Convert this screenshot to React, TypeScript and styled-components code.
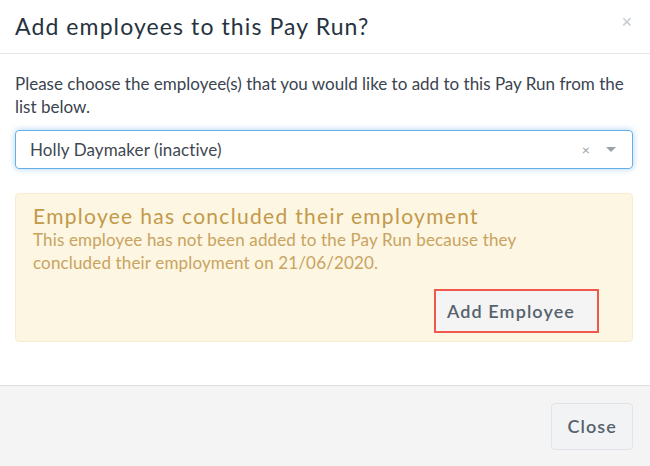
import React from 'react'
import styled, { createGlobalStyle } from 'styled-components'

const GlobalStyle = createGlobalStyle`
  html, body {
    margin: 0;
    padding: 0;
    background: #fff;
  }
  body {
    font-family: Lato, 'Open Sans', Arial, sans-serif;
    color: #3a4450;
  }
`

const Modal = styled.div`
  width: 650px;
  height: 466px;
  display: flex;
  flex-direction: column;
  background: #fff;
  overflow: hidden;
`

const Header = styled.div`
  height: 53px;
  display: flex;
  align-items: center;
  justify-content: space-between;
  padding: 0 18px 0 15px;
  border-bottom: 1px solid #e5e5e5;
  box-sizing: content-box;
`

const Title = styled.h4`
  margin: 0 0 2px;
  font-size: 23px;
  font-weight: 400;
  letter-spacing: 1.1px;
  color: #263340;
`

const CloseX = styled.button`
  border: none;
  background: none;
  padding: 0;
  font-size: 18px;
  line-height: 1;
  color: #c5c9cd;
  cursor: pointer;
  margin-top: -10px;
`

const Body = styled.div`
  flex: 1;
  padding: 18px 17px 0 15px;
  border-bottom: 1px solid #dedede;
`

const Intro = styled.p`
  margin: 0 0 12px;
  font-size: 17px;
  letter-spacing: 0;
  line-height: 23px;
  color: #3a4450;
`

const SelectBox = styled.div`
  height: 37px;
  display: flex;
  align-items: center;
  padding: 0 16px 0 14px;
  border: 1px solid #66afe9;
  border-radius: 4px;
  box-shadow: 0 0 6px rgba(102, 175, 233, 0.55);
  font-size: 17px;
  letter-spacing: 0.1px;
  color: #3f4852;
`

const SelectValue = styled.span`
  flex: 1;
`

const ClearX = styled.span`
  color: #9aa1a8;
  font-size: 14px;
  margin-right: 16px;
`

const Caret = styled.span`
  width: 0;
  height: 0;
  border-left: 5px solid transparent;
  border-right: 5px solid transparent;
  border-top: 5px solid #9aa1a8;
`

const Alert = styled.div`
  margin-top: 24px;
  padding: 9px 17px 8px 17px;
  background: #fcf6e2;
  border: 1px solid #f8ecd0;
  border-radius: 4px;
  display: flex;
  flex-direction: column;
`

const AlertTitle = styled.div`
  font-size: 21px;
  letter-spacing: 1.3px;
  color: #c3994a;
  line-height: 25px;
`

const AlertText = styled.div`
  font-size: 17px;
  letter-spacing: 0.15px;
  line-height: 23px;
  color: #c9a35f;
`

const Actions = styled.div`
  display: flex;
  justify-content: flex-end;
  margin-top: 15px;
  padding-right: 16px;
`

const Highlight = styled.div`
  border: 2px solid #f0584e;
`

const AddButton = styled.button`
  border: none;
  background: #f4f4f4;
  font-family: inherit;
  font-size: 18px;
  font-weight: 600;
  letter-spacing: 1.1px;
  color: #56626d;
  height: 40px;
  padding: 0 22px 0 11px;
  cursor: pointer;
`

const Footer = styled.div`
  height: 80px;
  background: #f4f4f4;
  display: flex;
  align-items: center;
  justify-content: flex-end;
  padding: 0 17px;
`

const FooterButton = styled.button`
  height: 47px;
  padding: 0 15px;
  background: #f2f3f5;
  border: 1px solid #e0e3e7;
  border-radius: 4px;
  font-family: inherit;
  font-size: 18px;
  font-weight: 600;
  letter-spacing: 1.1px;
  color: #56626d;
  cursor: pointer;
`

const App = () => {
  return (
    <>
      <GlobalStyle />
      <Modal>
        <Header>
          <Title>Add employees to this Pay Run?</Title>
          <CloseX aria-label='close'>×</CloseX>
        </Header>
        <Body>
          <Intro>
            Please choose the employee(s) that you would like to add to this Pay Run from the
            list below.
          </Intro>
          <SelectBox>
            <SelectValue>Holly Daymaker (inactive)</SelectValue>
            <ClearX>×</ClearX>
            <Caret />
          </SelectBox>
          <Alert>
            <AlertTitle>Employee has concluded their employment</AlertTitle>
            <AlertText>
              This employee has not been added to the Pay Run because they
              <br />
              concluded their employment on 21/06/2020.
            </AlertText>
            <Actions>
              <Highlight>
                <AddButton>Add Employee</AddButton>
              </Highlight>
            </Actions>
          </Alert>
        </Body>
        <Footer>
          <FooterButton>Close</FooterButton>
        </Footer>
      </Modal>
    </>
  )
}

export default App
